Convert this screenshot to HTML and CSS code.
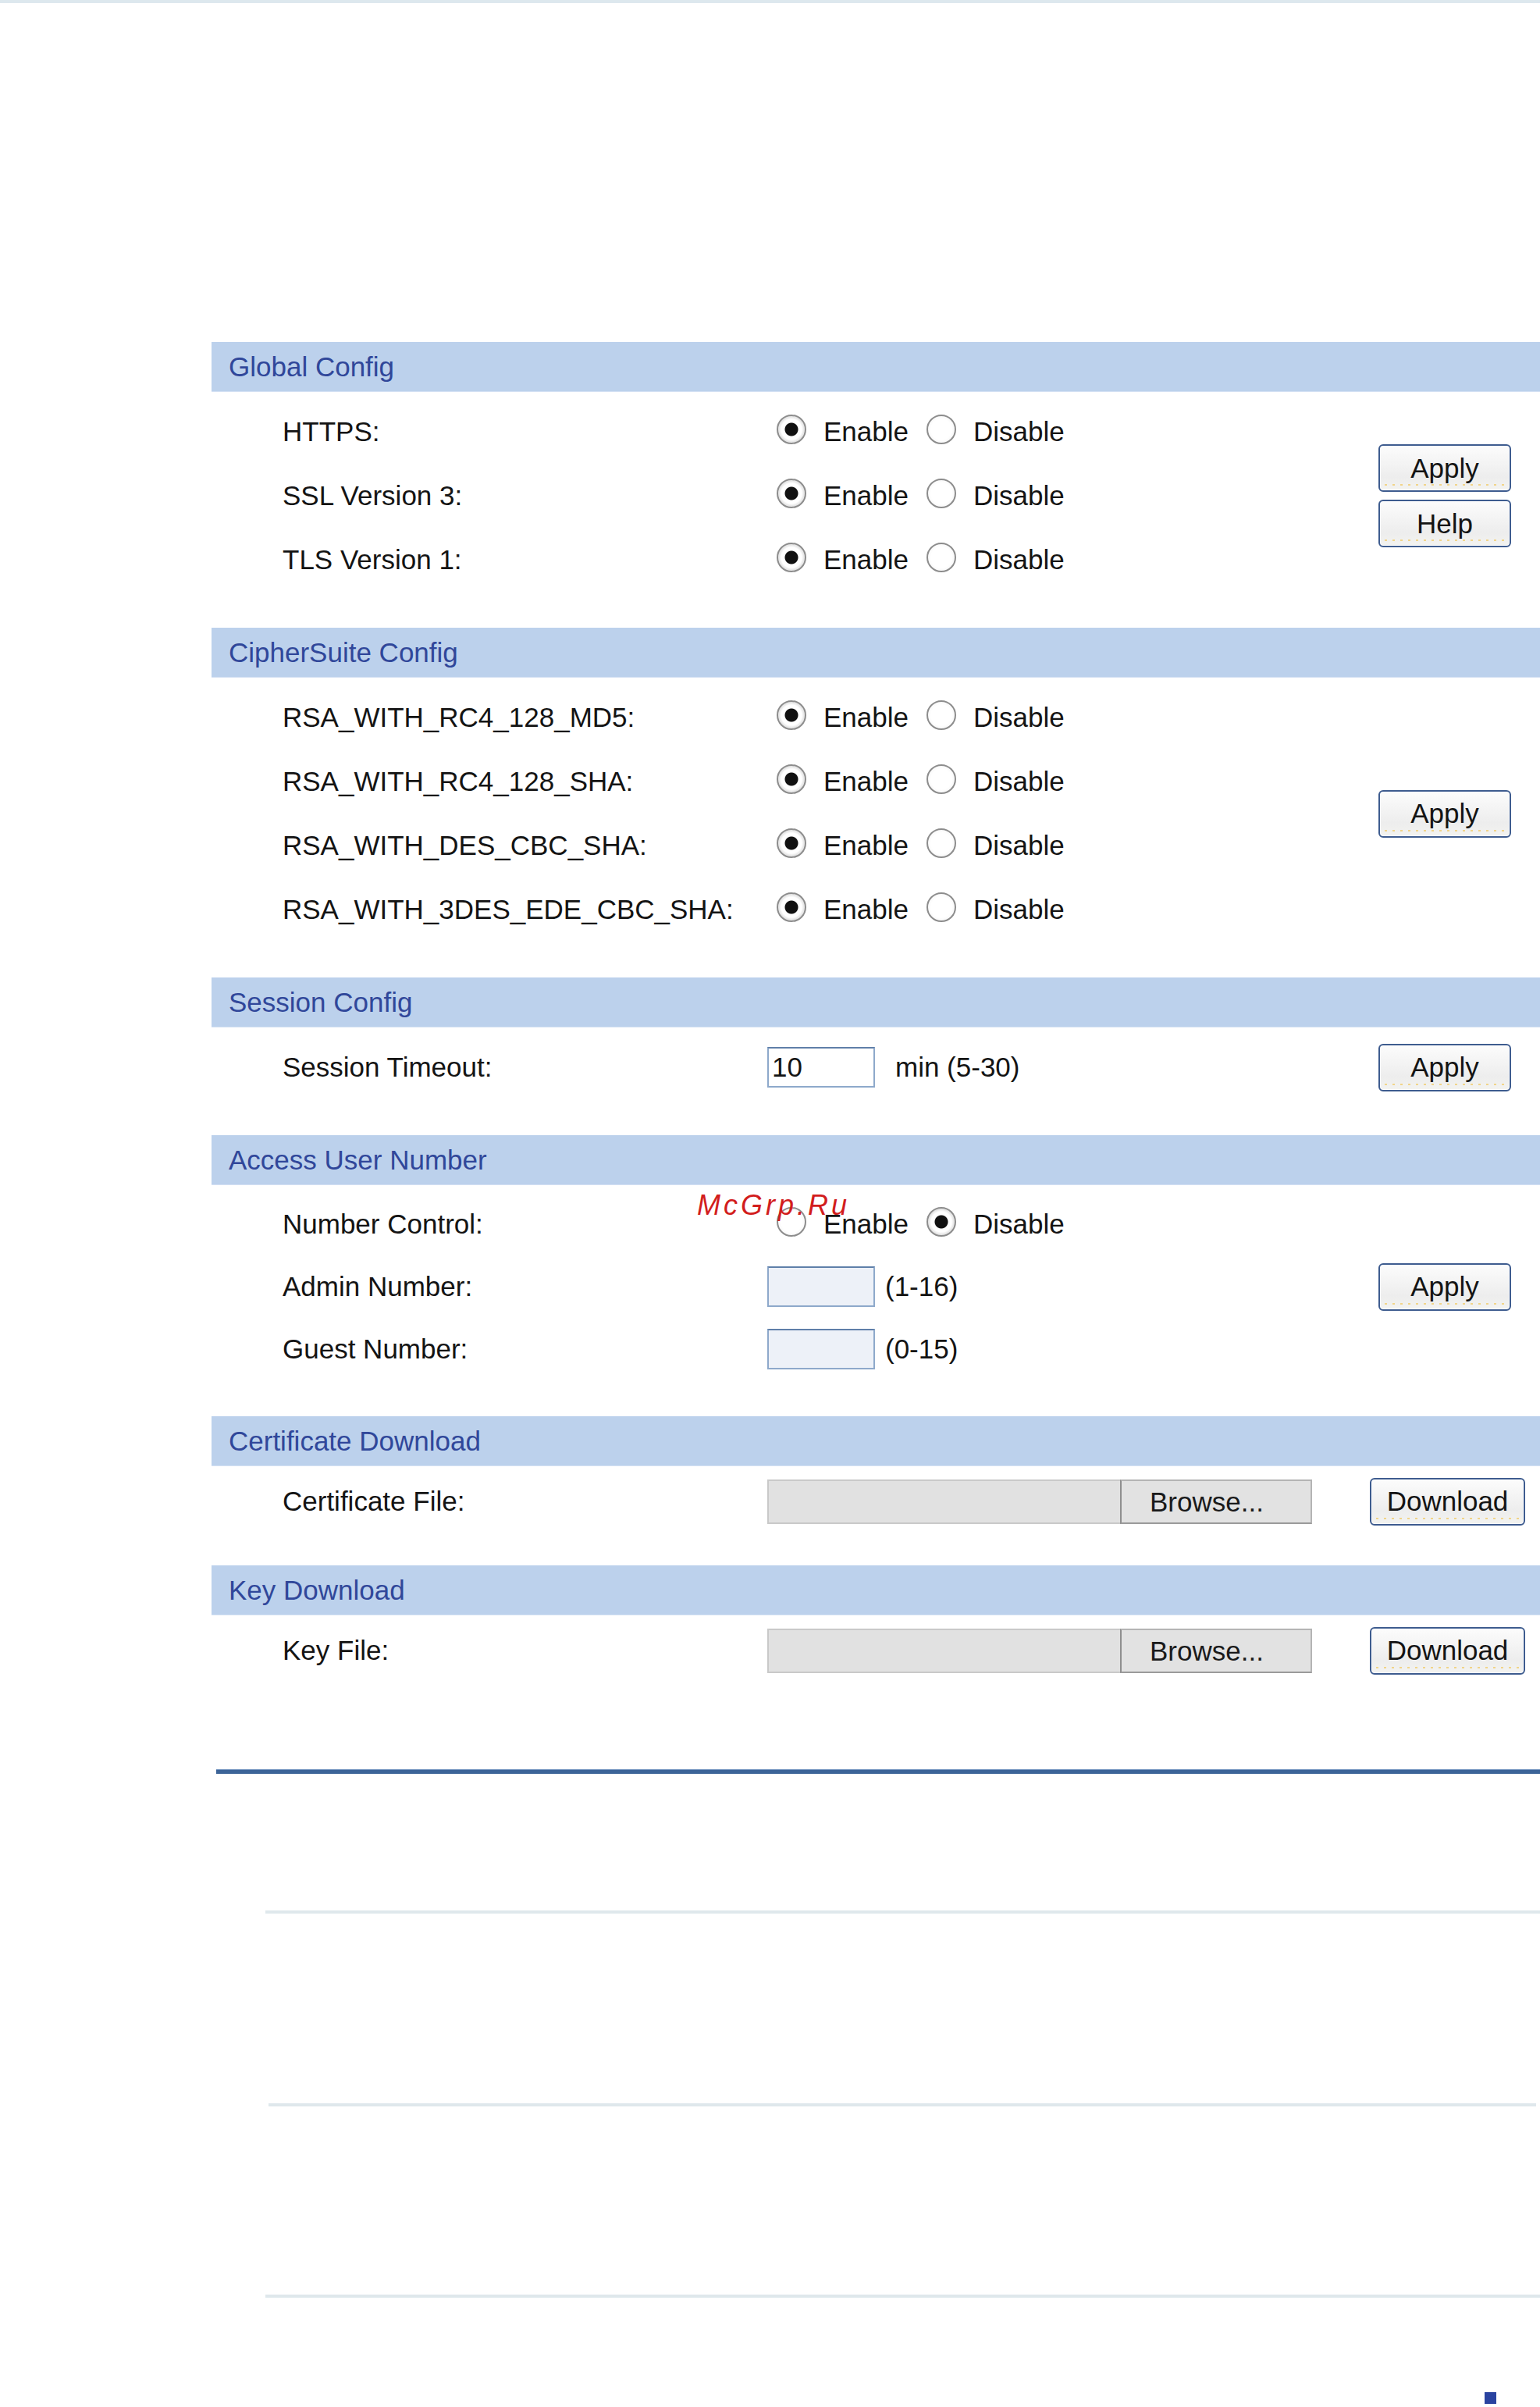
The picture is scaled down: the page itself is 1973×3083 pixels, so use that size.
FILE: index.html
```html
<!DOCTYPE html>
<html lang="en">
<head>
  <meta charset="UTF-8" />
  <title>HTTPS Config</title>
  <link rel="stylesheet" href="styles.css">
</head>
<body>
  <div class="topband"></div>

  <div class="page">
    <section class="panel">
      <div class="panel-head">Global Config</div>
      <div class="panel-body">
        <div class="rows">
          <div class="row">
            <span class="label">HTTPS:</span>
            <div class="radios">
              <label class="opt"><input type="radio" name="https" checked /> Enable</label>
              <label class="opt"><input type="radio" name="https" /> Disable</label>
            </div>
          </div>
          <div class="row">
            <span class="label">SSL Version 3:</span>
            <div class="radios">
              <label class="opt"><input type="radio" name="ssl3" checked /> Enable</label>
              <label class="opt"><input type="radio" name="ssl3" /> Disable</label>
            </div>
          </div>
          <div class="row">
            <span class="label">TLS Version 1:</span>
            <div class="radios">
              <label class="opt"><input type="radio" name="tls1" checked /> Enable</label>
              <label class="opt"><input type="radio" name="tls1" /> Disable</label>
            </div>
          </div>
        </div>
        <div class="actions">
          <button class="btn">Apply</button>
          <button class="btn">Help</button>
        </div>
      </div>
    </section>

    <section class="panel">
      <div class="panel-head">CipherSuite Config</div>
      <div class="panel-body">
        <div class="rows">
          <div class="row">
            <span class="label">RSA_WITH_RC4_128_MD5:</span>
            <div class="radios">
              <label class="opt"><input type="radio" name="c1" checked /> Enable</label>
              <label class="opt"><input type="radio" name="c1" /> Disable</label>
            </div>
          </div>
          <div class="row">
            <span class="label">RSA_WITH_RC4_128_SHA:</span>
            <div class="radios">
              <label class="opt"><input type="radio" name="c2" checked /> Enable</label>
              <label class="opt"><input type="radio" name="c2" /> Disable</label>
            </div>
          </div>
          <div class="row">
            <span class="label">RSA_WITH_DES_CBC_SHA:</span>
            <div class="radios">
              <label class="opt"><input type="radio" name="c3" checked /> Enable</label>
              <label class="opt"><input type="radio" name="c3" /> Disable</label>
            </div>
          </div>
          <div class="row">
            <span class="label">RSA_WITH_3DES_EDE_CBC_SHA:</span>
            <div class="radios">
              <label class="opt"><input type="radio" name="c4" checked /> Enable</label>
              <label class="opt"><input type="radio" name="c4" /> Disable</label>
            </div>
          </div>
        </div>
        <div class="actions">
          <button class="btn">Apply</button>
        </div>
      </div>
    </section>

    <section class="panel">
      <div class="panel-head">Session Config</div>
      <div class="panel-body">
        <div class="rows">
          <div class="row">
            <span class="label">Session Timeout:</span>
            <div class="field">
              <input class="text" type="text" value="10" />
              <span class="unit">min (5-30)</span>
            </div>
          </div>
        </div>
        <div class="actions">
          <button class="btn">Apply</button>
        </div>
      </div>
    </section>

    <section class="panel">
      <div class="panel-head">Access User Number</div>
      <div class="panel-body">
        <div class="rows">
          <div class="row short">
            <span class="label">Number Control:</span>
            <div class="radios">
              <label class="opt"><input type="radio" name="numctl" /> Enable</label>
              <label class="opt"><input type="radio" name="numctl" checked /> Disable</label>
            </div>
          </div>
          <div class="row short">
            <span class="label">Admin Number:</span>
            <div class="field">
              <input class="text off" type="text" disabled />
              <span class="range">(1-16)</span>
            </div>
          </div>
          <div class="row short">
            <span class="label">Guest Number:</span>
            <div class="field">
              <input class="text off" type="text" disabled />
              <span class="range">(0-15)</span>
            </div>
          </div>
        </div>
        <div class="actions">
          <button class="btn">Apply</button>
        </div>
      </div>
    </section>

    <section class="panel">
      <div class="panel-head">Certificate Download</div>
      <div class="panel-body compact">
        <div class="rows">
          <div class="row">
            <span class="label">Certificate File:</span>
            <div class="file">
              <span class="file-name"></span>
              <span class="browse">Browse...</span>
            </div>
          </div>
        </div>
        <div class="actions">
          <button class="btn wide">Download</button>
        </div>
      </div>
    </section>

    <section class="panel">
      <div class="panel-head">Key Download</div>
      <div class="panel-body compact">
        <div class="rows">
          <div class="row">
            <span class="label">Key File:</span>
            <div class="file">
              <span class="file-name"></span>
              <span class="browse">Browse...</span>
            </div>
          </div>
        </div>
        <div class="actions">
          <button class="btn wide">Download</button>
        </div>
      </div>
    </section>

    <div class="rule"></div>

    <div class="notes">
      <div class="note"></div>
      <div class="note inset"></div>
      <div class="note"></div>
    </div>

    <div class="page-mark"></div>
  </div>

  <div class="watermark">McGrp.Ru</div>
</body>
</html>
```

FILE: styles.css
```css
html, body {
  margin: 0;
  padding: 0;
  background: #fff;
}

body {
  font-family: "Liberation Sans", Arial, sans-serif;
  font-size: 35px;
  color: #141414;
  position: relative;
  overflow: hidden;
}

.topband {
  height: 4px;
  background: #dde8ee;
}

.page {
  margin-left: 271px;
  padding-top: 434px;
}

.panel-head {
  height: 64px;
  box-sizing: border-box;
  line-height: 63px;
  padding-left: 22px;
  background: #bcd1ec;
  border-bottom: 1px solid #d3e0f3;
  color: #30479a;
}

.panel-body {
  display: flex;
  padding: 10px 0 46px;
}

.panel-body.compact {
  padding: 4px 0 41px;
}

.rows {
  flex: 1;
}

.row {
  display: flex;
  align-items: center;
  height: 82px;
  padding-left: 91px;
}

.row.short {
  height: 80px;
}

.label {
  width: 621px;
  flex-shrink: 0;
}

.radios {
  display: flex;
  align-items: center;
}

.opt {
  display: flex;
  align-items: center;
}

.opt + .opt input {
  margin-left: 23px;
}

.opt input {
  appearance: none;
  -webkit-appearance: none;
  width: 38px;
  height: 38px;
  margin: -6px 22px 0 12px;
  border: 2px solid #8d8d8d;
  border-radius: 50%;
  background: radial-gradient(circle, #fff 55%, #ececec 100%);
  box-sizing: border-box;
}

.opt:first-child input {
  margin-left: 12px;
}

.opt input:checked {
  background: radial-gradient(circle, #111 0 8px, #fff 9px 13px, #e6e6e6 16px);
}

.field {
  display: flex;
  align-items: center;
}

.text {
  width: 138px;
  height: 52px;
  box-sizing: border-box;
  border: 2px solid #8ea9cb;
  border-top-color: #5f7fa9;
  padding: 0 4px;
  font: inherit;
  color: #141414;
  background: #fff;
}

.text.off {
  background: #edf1f8;
}

.unit {
  margin-left: 26px;
}

.range {
  margin-left: 13px;
}

.file {
  display: flex;
  width: 698px;
  height: 57px;
}

.file-name {
  flex: 1;
  background: #e1e1e1;
  border: 2px solid #c9c9c9;
  border-right: none;
}

.browse {
  width: 246px;
  box-sizing: border-box;
  padding-left: 36px;
  line-height: 53px;
  background: #e2e2e2;
  border: 2px solid #b4b4b4;
  border-left-color: #8f8f8f;
  border-bottom-color: #9a9a9a;
  color: #1a1a1a;
}

.actions {
  width: 218px;
  display: flex;
  flex-direction: column;
  justify-content: center;
  gap: 10px;
}

.btn {
  width: 170px;
  height: 61px;
  margin-left: 11px;
  padding: 0;
  font: inherit;
  color: #141414;
  border: 2px solid #3e5c8f;
  border-radius: 6px;
  background:
    repeating-linear-gradient(90deg, #f1d489 0 3px, transparent 3px 10px) 6px calc(100% - 6px) / calc(100% - 12px) 2px no-repeat,
    linear-gradient(#fcfcfc, #ededed 70%, #f3f3f0);
  box-shadow: inset 0 0 0 1px #fff;
}

.btn.wide {
  width: 199px;
  margin-left: 0;
}

.rule {
  height: 6px;
  margin: 70px 0 0 6px;
  background: linear-gradient(#7c9bc4 0 1px, #3c6498 1px);
}

.notes {
  margin-left: 69px;
}

.note {
  height: 175px;
  border-bottom: 4px solid #dfe8ec;
}

.note.inset {
  height: 243px;
  margin: 0 5px 0 4px;
}

.note + .note.inset + .note {
  height: 241px;
}

.page-mark {
  width: 15px;
  height: 15px;
  margin: 121px 0 0 1631px;
  background: #2a43a0;
}

.watermark {
  position: absolute;
  left: 893px;
  top: 1526px;
  font-size: 36px;
  line-height: 1;
  font-style: italic;
  letter-spacing: 4px;
  color: #d21d1d;
}
```
